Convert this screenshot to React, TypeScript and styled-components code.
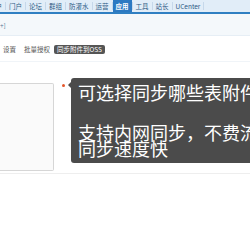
import React from "react";
import styled, { createGlobalStyle } from "styled-components";

const GlobalStyle = createGlobalStyle`
  html, body { margin: 0; padding: 0; background: #ffffff; }
  body {
    width: 250px;
    height: 250px;
    overflow: hidden;
    font-family: "Noto Sans CJK SC", "Noto Sans", "Liberation Sans", sans-serif;
  }
`;

const Page = styled.div`
  width: 250px;
  height: 250px;
  overflow: hidden;
  display: flex;
  flex-direction: column;
`;

const NavBar = styled.div`
  display: flex;
  align-items: stretch;
  height: 12px;
  background: #e1edf8;
  border-bottom: 2px solid #2f7fc2;
  margin-left: -14px;
  white-space: nowrap;
`;

const NavItem = styled.span<{ $active?: boolean }>`
  display: flex;
  align-items: center;
  padding: 0 3px;
  font-size: 6.5px;
  line-height: 12px;
  color: ${(p) => (p.$active ? "#ffffff" : "#2d5a85")};
  background: ${(p) => (p.$active ? "#2b79c2" : "transparent")};
  font-weight: ${(p) => (p.$active ? 700 : 400)};
`;

const NavSep = styled.span`
  width: 1px;
  margin: 2px 0;
  background: #c6d8ea;
`;

const SubBar = styled.div`
  height: 22px;
  background: #f4f8fb;
  border-bottom: 1px solid #e6eef5;
  display: flex;
  align-items: center;
  font-size: 6.5px;
  color: #5a7a98;
  padding-top: 1px;
  box-sizing: border-box;
`;

const TabRow = styled.div`
  display: flex;
  align-items: center;
  gap: 8px;
  height: 26px;
  padding-left: 3px;
  padding-top: 1px;
  box-sizing: border-box;
  border-bottom: 1px solid #f0f4f8;
`;

const Tab = styled.span<{ $active?: boolean }>`
  font-size: 6.5px;
  line-height: 9px;
  padding: ${(p) => (p.$active ? "0 3px" : "0")};
  border-radius: 2px;
  color: ${(p) => (p.$active ? "#ffffff" : "#555555")};
  background: ${(p) => (p.$active ? "#555555" : "transparent")};
  margin-left: ${(p) => (p.$active ? "-4px" : "0")};
`;

const Body = styled.div`
  position: relative;
  padding-top: 21px;
  border-bottom: 1px solid #eeeeee;
  padding-bottom: 2px;
`;

const FieldRow = styled.div`
  display: flex;
  align-items: flex-start;
`;

const InputBox = styled.div`
  width: 53px;
  height: 86px;
  background: #fafafa;
  border: 1px solid #d6d6d6;
  border-left: none;
  border-radius: 0 2px 2px 0;
`;

const Dot = styled.span`
  width: 3px;
  height: 3px;
  border-radius: 50%;
  background: #e5562a;
  margin-left: 8px;
  margin-top: 1px;
`;

const Tooltip = styled.div`
  position: absolute;
  left: 71px;
  top: 16px;
  width: 230px;
  height: 85px;
  box-sizing: border-box;
  padding: 6px 0 0 7px;
  background: #4b4b4b;
  border-radius: 3px;
  color: #ffffff;
  font-size: 18px;
  line-height: 16px;
  white-space: nowrap;

  &::before {
    content: "";
    position: absolute;
    left: -3px;
    top: 4px;
    border-style: solid;
    border-width: 3px 3px 3px 0;
    border-color: transparent #4b4b4b transparent transparent;
  }
`;

const TipLine = styled.div<{ $gap?: number }>`
  margin-top: ${(p) => p.$gap ?? 0}px;
`;

const navItems = ["用户", "门户", "论坛", "群组", "防灌水", "运营", "应用", "工具", "站长", "UCenter"];

export default function App() {
  return (
    <Page>
      <GlobalStyle />
      <NavBar>
        {navItems.map((t) => (
          <React.Fragment key={t}>
            <NavItem $active={t === "应用"}>{t}</NavItem>
            <NavSep />
          </React.Fragment>
        ))}
      </NavBar>
      <SubBar>+]</SubBar>
      <TabRow>
        <Tab>设置</Tab>
        <Tab>批量授权</Tab>
        <Tab $active>同步附件到OSS</Tab>
      </TabRow>
      <Body>
        <FieldRow>
          <InputBox />
          <Dot />
        </FieldRow>
        <Tooltip>
          <TipLine>可选择同步哪些表附件</TipLine>
          <TipLine $gap={24}>支持内网同步，不费流量</TipLine>
          <TipLine>同步速度快</TipLine>
        </Tooltip>
      </Body>
    </Page>
  );
}
